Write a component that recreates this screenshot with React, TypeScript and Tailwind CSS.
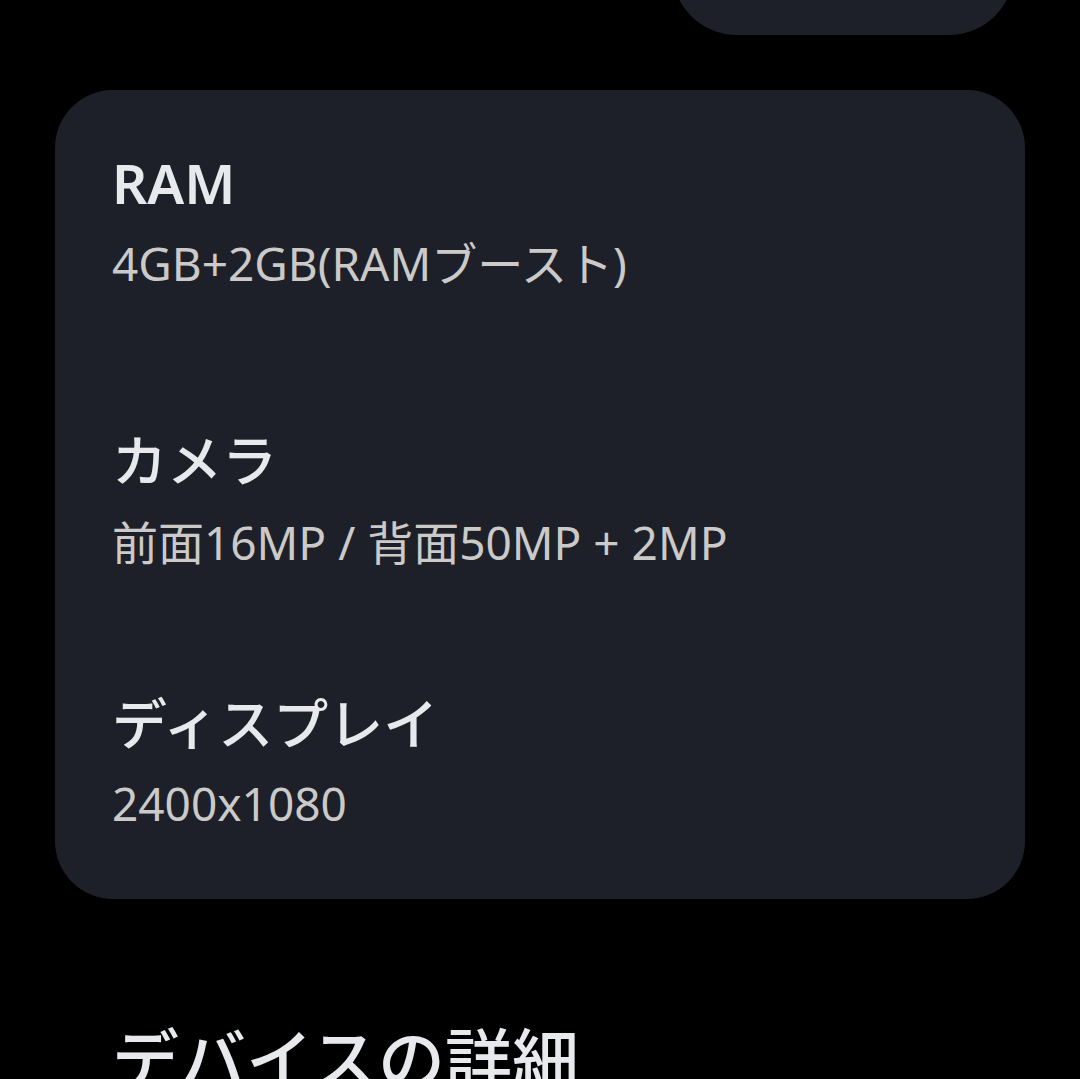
const specs = [
  { label: "RAM", value: "4GB+2GB(RAMブースト)", top: "mt-0", gap: "mt-[20px]", weight: "font-semibold" },
  { label: "カメラ", value: "前面16MP / 背面50MP + 2MP", top: "mt-[137px]", gap: "mt-[22px]", weight: "font-medium" },
  { label: "ディスプレイ", value: "2400x1080", top: "mt-[121px]", gap: "mt-[20px]", weight: "font-medium" },
];

export default function App() {
  return (
    <div
      className="h-[1079px] overflow-hidden bg-black"
      style={{ fontFamily: '"Noto Sans", "Noto Sans CJK JP", sans-serif' }}
    >
      <div className="flex justify-end pr-[66px]">
        <div className="-mt-[95px] h-[130px] w-[342px] rounded-full bg-[#1d2028]" />
      </div>

      <div className="mx-[55px] mt-[55px] flex flex-col rounded-[58px] bg-[#1d2028] pb-[68px] pl-[57px] pr-[57px] pt-[61px]">
        {specs.map((spec) => (
          <div key={spec.label} className={`flex flex-col ${spec.top}`}>
            <p className={`text-[55px] leading-[64px] text-[#e7e9ed] ${spec.weight}`}>
              {spec.label}
            </p>
            <p className={`${spec.gap} text-[46px] leading-[56px] text-[#cbcac8]`}>
              {spec.value}
            </p>
          </div>
        ))}
      </div>

      <h2 className="mt-[120px] px-[112px] text-[67px] font-medium leading-[80px] text-[#e7e9ed]">
        デバイスの詳細
      </h2>
    </div>
  );
}
